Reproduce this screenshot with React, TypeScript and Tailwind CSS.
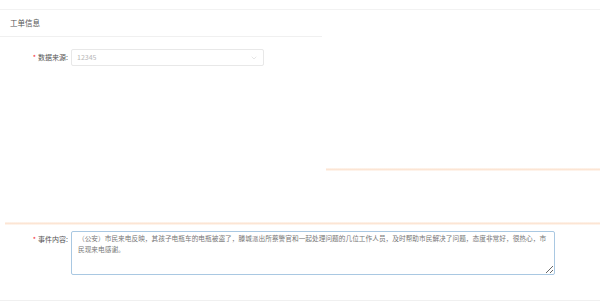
import { ChevronDown } from "lucide-react";

const content =
  "（公安）市民来电反映，其孩子电瓶车的电瓶被盗了，滕城派出所蔡警官和一起处理问题的几位工作人员，及时帮助市民解决了问题，态度非常好，很热心，市民现来电感谢。";

export default function App() {
  return (
    <div
      className="w-[600px] h-[303px] bg-white overflow-hidden pt-[9px]"
      style={{ fontFamily: "'Noto Sans CJK SC', 'Noto Sans', sans-serif" }}
    >
      {/* header */}
      <div className="w-full border-t border-[#f2f2f2]">
        <div className="w-[322px] h-[27px] border-b border-[#f0f0f0] flex items-center pl-[10px]">
          <span className="text-[7.5px] text-[#555]">工单信息</span>
        </div>
      </div>

      {/* form body */}
      <div className="flex h-[185px]">
        <div className="w-[322px] pt-[12px]">
          <div className="flex items-center">
            <div className="w-[71px] flex justify-end items-center pr-[3px] text-[7px] text-[#555]">
              <span className="text-[#f5222d] mr-[2px] text-[7px] leading-none">*</span>
              <span>数据来源:</span>
            </div>
            <div className="w-[193px] h-[17px] border border-[#e8e8e8] rounded-[2px] flex items-center justify-between pl-[5px] pr-[5px]">
              <span className="text-[7px] text-[#b8b8b8]">12345</span>
              <ChevronDown size={8} strokeWidth={1.5} className="text-[#cccccc]" />
            </div>
          </div>
        </div>
        <div className="flex-1 pt-[131px] pl-[4px]">
          <div className="h-[3px] bg-gradient-to-b from-[#fef6f0] via-[#fce5d4] to-[#fffaf6]"></div>
        </div>
      </div>

      <div className="ml-[5px] h-[3px] bg-gradient-to-b from-[#fef6f0] via-[#fce5d4] to-[#fffaf6]"></div>

      {/* event content */}
      <div className="flex items-start mt-[6px]">
        <div className="w-[71px] h-[16px] flex justify-end items-center pr-[3px] text-[7px] text-[#555]">
          <span className="text-[#f5222d] mr-[2px] text-[7px] leading-none">*</span>
          <span>事件内容:</span>
        </div>
        <textarea
          readOnly
          defaultValue={content}
          className="w-[484px] h-[44px] border border-[#a9c8e2] rounded-[2px] px-[6px] pt-[1px] text-[6.7px] leading-[11px] text-[#777] outline-none resize-y"
          style={{ fontFamily: "'Noto Sans CJK SC', 'Noto Sans', sans-serif" }}
        />
      </div>

      <div className="mt-[25px] border-t border-[#f0f0f0]"></div>
    </div>
  );
}
